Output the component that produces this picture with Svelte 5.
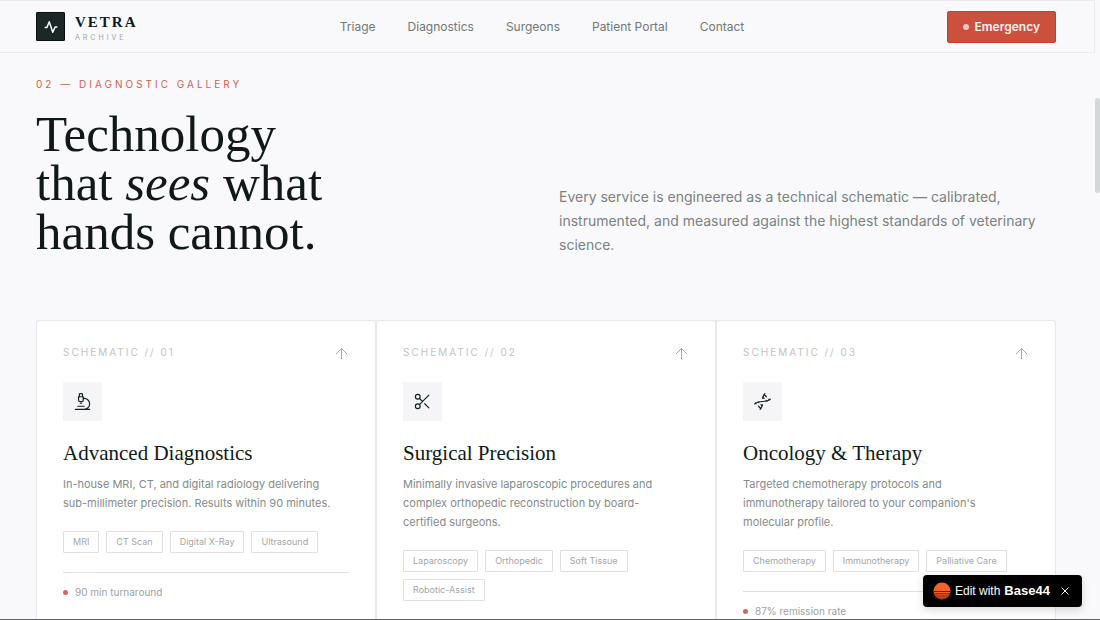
<script lang="ts">
	type Icon = 'microscope' | 'scissors' | 'dna';

	type Service = {
		code: string;
		icon: Icon;
		title: string;
		description: string;
		tags: string[];
		stat?: string;
	};

	const links = ['Triage', 'Diagnostics', 'Surgeons', 'Patient Portal', 'Contact'];

	const services: Service[] = [
		{
			code: '01',
			icon: 'microscope',
			title: 'Advanced Diagnostics',
			description:
				'In-house MRI, CT, and digital radiology delivering sub-millimeter precision. Results within 90 minutes.',
			tags: ['MRI', 'CT Scan', 'Digital X-Ray', 'Ultrasound'],
			stat: '90 min turnaround'
		},
		{
			code: '02',
			icon: 'scissors',
			title: 'Surgical Precision',
			description:
				'Minimally invasive laparoscopic procedures and complex orthopedic reconstruction by board-certified surgeons.',
			tags: ['Laparoscopy', 'Orthopedic', 'Soft Tissue', 'Robotic-Assist']
		},
		{
			code: '03',
			icon: 'dna',
			title: 'Oncology & Therapy',
			description:
				"Targeted chemotherapy protocols and immunotherapy tailored to your companion's molecular profile.",
			tags: ['Chemotherapy', 'Immunotherapy', 'Palliative Care'],
			stat: '87% remission rate'
		}
	];

	let showBadge = $state(true);
</script>

<div class="page">
	<header class="topbar">
		<a class="brand" href="#top">
			<span class="brand-mark">
				<svg viewBox="0 0 24 24" width="14" height="14" aria-hidden="true">
					<path d="M2 13h3l4-10 6 18 4-9h3" />
				</svg>
			</span>
			<span class="brand-text">
				<span class="brand-name">VETRA</span>
				<span class="brand-sub">ARCHIVE</span>
			</span>
		</a>
		<nav class="nav">
			{#each links as link}
				<a href="#{link.toLowerCase().replace(' ', '-')}">{link}</a>
			{/each}
		</nav>
		<button class="emergency" type="button"><span class="pulse"></span>Emergency</button>
	</header>

	<main class="gallery">
		<p class="eyebrow">02 — DIAGNOSTIC GALLERY</p>

		<div class="intro">
			<h1>Technology<br />that <em>sees</em> what<br />hands cannot.</h1>
			<p>
				Every service is engineered as a technical schematic — calibrated, instrumented, and
				measured against the highest standards of veterinary science.
			</p>
		</div>

		<div class="cards">
			{#each services as service}
				<article class="card">
					<div class="card-top">
						<span class="code">SCHEMATIC // {service.code}</span>
						<svg class="arrow" viewBox="0 0 14 14" width="14" height="14" aria-hidden="true">
							<path d="M6.500 12.500v-11M1 7l5.500-5.500L12 7" />
						</svg>
					</div>

					<div class="icon-box">
						<svg viewBox="0 0 24 24" width="19" height="19" aria-hidden="true">
							{#if service.icon === 'microscope'}
								<path d="M6 18h8M3 22h18M14 22a7 7 0 1 0 0-14h-1M9 14h2" />
								<path d="M9 12a2 2 0 0 1-2-2V6h6v4a2 2 0 0 1-2 2Z" />
								<path d="M12 6V3a1 1 0 0 0-1-1H9a1 1 0 0 0-1 1v3" />
							{:else if service.icon === 'scissors'}
								<circle cx="6" cy="6" r="3" />
								<circle cx="6" cy="18" r="3" />
								<path d="M8.1 8.1 12 12M20 4 8.1 15.9M14.8 14.8 20 20" />
							{:else}
								<path d="M2 15c6.667-6 13.333 0 20-6" />
								<path d="M15 2c-1.798 1.998-2.518 3.995-2.807 5.993" />
								<path d="M9 22c1.798-1.998 2.518-3.995 2.807-5.993" />
								<path d="m17 6-2.891-2.891M14 8l-1.500-1.500M16.500 10.500l1 1M20 9l.891.891" />
								<path d="m10 16 1.500 1.500M7 18l2.891 2.891M6.500 12.500l1 1M3.109 14.109 4 15" />
							{/if}
						</svg>
					</div>

					<h2>{service.title}</h2>
					<p class="description">{service.description}</p>

					<ul class="tags">
						{#each service.tags as tag}
							<li>{tag}</li>
						{/each}
					</ul>

					{#if service.stat}
						<div class="stat"><span class="stat-dot"></span>{service.stat}</div>
					{/if}
				</article>
			{/each}
		</div>
	</main>

	<div class="scroll-thumb"></div>

	{#if showBadge}
		<div class="badge">
			<a href="#edit">
				<svg viewBox="0 0 18 18" width="18" height="18" aria-hidden="true">
					<circle cx="9" cy="9" r="8.500" fill="#f2602b" />
					<path d="M0 9.500h18M0 11.800h18M0 14h18M2 16h14" stroke="#5c1d08" stroke-width=".9" />
				</svg>
				<span>Edit with</span>
				<strong>Base44</strong>
			</a>
			<button type="button" aria-label="Close" onclick={() => (showBadge = false)}>
				<svg viewBox="0 0 8 8" width="8" height="8" aria-hidden="true">
					<path d="m.5.5 7 7m0-7-7 7" stroke="#fff" />
				</svg>
			</button>
		</div>
	{/if}
</div>

<style>
	:global(body) {
		margin: 0;
		overflow: hidden;
	}

	.page {
		position: relative;
		box-sizing: border-box;
		height: 100vh;
		overflow: hidden;
		border-bottom: 1px solid #636365;
		background: #f9f9fb;
		color: #101918;
		font-family: Inter, 'Liberation Sans', sans-serif;
	}

	a {
		color: inherit;
		text-decoration: none;
	}

	/* --- Top bar --- */
	.topbar {
		display: flex;
		align-items: center;
		justify-content: space-between;
		box-sizing: border-box;
		height: 53px;
		margin-right: 5px;
		padding: 0 38px 0 36px;
		border: 1px solid #ebebed;
		border-left: 0;
	}

	.brand {
		display: flex;
		align-items: center;
		gap: 10px;
	}

	.brand-mark {
		display: flex;
		align-items: center;
		justify-content: center;
		box-sizing: border-box;
		width: 29px;
		height: 29px;
		border: 1px solid #07100f;
		border-radius: 1px;
		background: #1b2827;
	}

	.brand-mark svg {
		fill: none;
		stroke: #fff;
		stroke-width: 2.500;
		stroke-linecap: round;
		stroke-linejoin: round;
	}

	.brand-text {
		display: flex;
		flex-direction: column;
		gap: 3px;
		padding-top: 4px;
	}

	.brand-name {
		font: 700 15px/16px 'Liberation Serif', serif;
		letter-spacing: 2px;
	}

	.brand-sub {
		color: #a0a3a5;
		font-size: 7px;
		line-height: 10px;
		letter-spacing: 3px;
	}

	.nav {
		display: flex;
		gap: 32px;
		color: #727777;
		font-size: 12px;
	}

	.emergency {
		display: flex;
		align-items: center;
		gap: 6px;
		height: 32px;
		padding: 0 15px;
		border: 1px solid #c4402d;
		border-radius: 2px;
		background: #cb503e;
		color: #fff3f0;
		font: 600 12px/16px Inter, 'Liberation Sans', sans-serif;
	}

	.pulse {
		width: 6px;
		height: 6px;
		border-radius: 50%;
		background: #f1c8c1;
	}

	/* --- Section intro --- */
	.gallery {
		padding: 24px 44px 0 36px;
	}

	.eyebrow {
		margin: 0;
		color: #cd6255;
		font-size: 10px;
		line-height: 14px;
		letter-spacing: 3px;
	}

	.intro {
		display: grid;
		grid-template-columns: 1fr 1fr;
		align-items: end;
		gap: 26px;
		margin-top: 19px;
	}

	h1 {
		margin: 0;
		font: 400 51px/49px 'Liberation Serif', serif;
	}

	.intro p {
		margin: 0;
		color: #7b8181;
		font-size: 14px;
		line-height: 24px;
	}

	/* --- Cards --- */
	.cards {
		display: grid;
		grid-template-columns: repeat(3, 1fr);
		gap: 2px;
		margin-top: 63px;
		padding: 1px;
		border-radius: 2px;
		background: #e9e8ec;
	}

	.card {
		padding: 24px 26px 60px;
		border-radius: 3px;
		background: #fff;
	}

	.card-top {
		display: flex;
		align-items: flex-start;
		justify-content: space-between;
	}

	.code {
		color: #c4c2c8;
		font-size: 10px;
		line-height: 14px;
		letter-spacing: 2px;
	}

	.arrow {
		margin-top: 2px;
		fill: none;
		stroke: #a9a7ab;
	}

	.icon-box {
		display: flex;
		align-items: center;
		justify-content: center;
		width: 39px;
		height: 39px;
		margin-top: 21px;
		border-radius: 1px;
		background: #f5f5f7;
	}

	.icon-box svg {
		fill: none;
		stroke: #142322;
		stroke-width: 1.500;
		stroke-linecap: round;
		stroke-linejoin: round;
	}

	h2 {
		margin: 19px 0 0;
		font: 400 21px/26px 'Liberation Serif', serif;
	}

	.description {
		max-width: 276px;
		margin: 9px 0 0;
		color: #858a8a;
		font-size: 11px;
		line-height: 19px;
	}

	.tags {
		display: flex;
		flex-wrap: wrap;
		gap: 7px;
		margin: 18px 0 0;
		padding: 0;
		list-style: none;
	}

	.tags li {
		padding: 3px 9px;
		border: 1px solid #e0e0e3;
		border-radius: 1px;
		color: #a3a6a7;
		font-size: 9px;
		line-height: 14px;
	}

	.stat {
		display: flex;
		align-items: center;
		gap: 7px;
		margin-top: 19px;
		padding-top: 12px;
		border-top: 1px solid #e0e0e2;
		color: #9da1a1;
		font-size: 10px;
		line-height: 14px;
	}

	.stat-dot {
		width: 5px;
		height: 5px;
		border-radius: 50%;
		background: #cc6b60;
	}

	/* --- Overlays --- */
	.scroll-thumb {
		position: absolute;
		top: 98px;
		right: 0;
		width: 5px;
		height: 95px;
		border-radius: 3px;
		background: #d4d8d8;
	}

	.badge {
		position: absolute;
		right: 18px;
		bottom: 12px;
		display: flex;
		align-items: center;
		justify-content: space-between;
		box-sizing: border-box;
		width: 159px;
		height: 32px;
		padding: 0 13px 0 10px;
		border-radius: 4px;
		background: #000;
		box-shadow: 0 3px 8px rgba(0, 0, 0, 0.15);
		color: #fff;
		font: 12px/16px 'Liberation Sans', sans-serif;
	}

	.badge a {
		display: flex;
		align-items: center;
		gap: 4px;
	}

	.badge strong {
		font-size: 13px;
	}

	.badge button {
		display: flex;
		padding: 0;
		border: 0;
		background: none;
	}
</style>
